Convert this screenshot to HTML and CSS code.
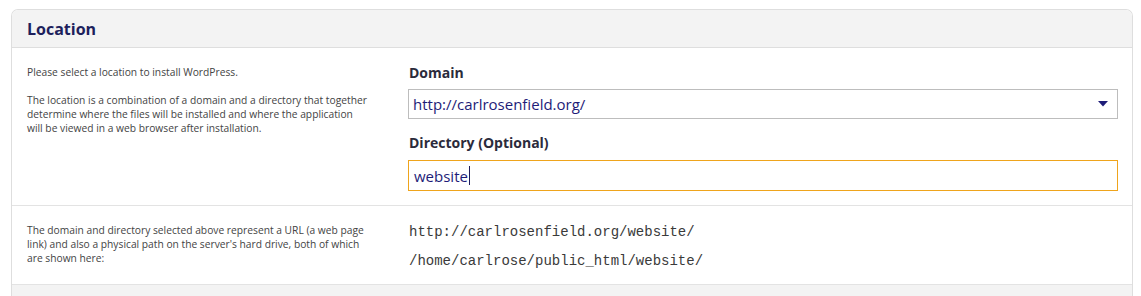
FILE: index.html
```html
<!DOCTYPE html>
<html>
<head>
<meta charset="utf-8">
<link rel="stylesheet" href="styles.css">
</head>
<body>
<div class="panel">
  <div class="panel-head">Location</div>
  <div class="row row-first">
    <div class="desc">
      <p>Please select a location to install WordPress.</p>
      <p>The location is a combination of a domain and a directory that together determine where the files will be installed and where the application will be viewed in a web browser after installation.</p>
    </div>
    <div class="fields">
      <label class="label">Domain</label>
      <div class="select">
        <span class="select-text">http://carlrosenfield.org/</span>
        <svg class="caret" width="10" height="6" viewBox="0 0 10 6"><path d="M0 0H10L5 5.5Z" fill="#1e1c78"/></svg>
      </div>
      <label class="label label-dir">Directory (Optional)</label>
      <div class="input"><span class="input-text">website</span><span class="cursor"></span></div>
    </div>
  </div>
  <div class="row row-second">
    <div class="desc">
      <p>The domain and directory selected above represent a URL (a web page link) and also a physical path on the server's hard drive, both of which are shown here:</p>
    </div>
    <div class="paths">
      <div class="path">http://carlrosenfield.org/website/</div>
      <div class="path">/home/carlrose/public_html/website/</div>
    </div>
  </div>
  <div class="panel-foot"></div>
</div>
</body>
</html>
```
FILE: styles.css
```css
html, body {
  margin: 0;
  padding: 0;
  background: #ffffff;
}
body {
  font-family: "Open Sans", "DejaVu Sans", sans-serif;
}
.panel {
  margin: 9px 8px 0 11px;
  border: 1px solid #dedede;
  border-bottom: none;
  border-radius: 7px 7px 0 0;
  overflow: hidden;
}
.panel-head {
  background: #f3f3f3;
  height: 37px;
  border-bottom: 1px solid #dedede;
  padding-left: 15px;
  font-size: 16px;
  font-weight: bold;
  color: #1d1f5c;
  line-height: 38px;
}
.row {
  display: grid;
  grid-template-columns: 366px 1fr;
  column-gap: 15px;
  padding: 0 14px 0 15px;
}
.row-first {
  height: 157px;
  border-bottom: 1px solid #e3e3e3;
}
.desc {
  font-size: 10.25px;
  line-height: 14px;
  color: #444444;
}
.desc p {
  margin: 0 0 14px 0;
  padding-right: 24px;
}
.row-first .desc {
  padding-top: 17px;
}
.fields {
  padding-top: 16px;
  display: flex;
  flex-direction: column;
}
.label {
  font-size: 14px;
  font-weight: bold;
  color: #2b2b3b;
  line-height: 18px;
  padding-left: 1px;
}
.label-dir {
  margin-top: 15px;
}
.select {
  margin-top: 7px;
  height: 28px;
  border: 1px solid #bdbdbd;
  display: flex;
  align-items: center;
  justify-content: space-between;
  padding: 0 9px 0 4px;
}
.select-text, .input-text {
  font-size: 15px;
  color: #1e1c78;
}
.input {
  margin-top: 8px;
  height: 29px;
  border: 1px solid #efa41c;
  display: flex;
  align-items: center;
  padding: 0 5px;
}
.cursor {
  width: 1px;
  height: 19px;
  background: #1e1c5c;
  margin-left: 1px;
}
.row-second {
  height: 78px;
  border-bottom: 1px solid #e3e3e3;
}
.row-second .desc {
  padding-top: 17px;
}
.paths {
  padding-top: 18px;
  padding-left: 1px;
}
.path {
  font-family: "Liberation Mono", monospace;
  font-size: 14px;
  line-height: 16px;
  color: #3a3a3a;
  margin-bottom: 13px;
}
.panel-foot {
  height: 20px;
  background: #f3f3f3;
}
```
